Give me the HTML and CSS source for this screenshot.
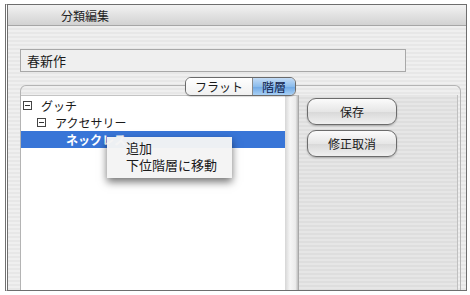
FILE: index.html
```html
<!DOCTYPE html>
<html lang="ja">
<head>
    <meta charset="UTF-8">
    <meta name="viewport" content="width=device-width, initial-scale=1.0">
    <title>分類編集</title>
    <link rel="stylesheet" href="styles.css">
</head>
<body>
    <div class="window">
        <div class="titlebar"><span class="title">分類編集</span></div>
        <div class="content">
            <div class="namefield">春新作</div>

            <div class="tabs">
                <div class="segmented">
                    <span class="seg seg-left">フラット</span>
                    <span class="seg seg-right active">階層</span>
                </div>
            </div>

            <div class="group">
                <div class="tree">
                    <div class="row level0"><span class="toggle"></span>グッチ</div>
                    <div class="row level1"><span class="toggle"></span>アクセサリー</div>
                    <div class="row level2 selected">ネックレス</div>

                    <!-- context menu over the selected row -->
                    <div class="menu">
                        <div class="menu-item">追加</div>
                        <div class="menu-item">下位階層に移動</div>
                    </div>
                </div>
                <div class="scrollbar"></div>
                <div class="actions">
                    <button type="button">保存</button>
                    <button type="button">修正取消</button>
                </div>
            </div>
        </div>
    </div>
</body>
</html>
```

FILE: styles.css
```css
body {
    margin: 0;
    padding: 4px 0 0 5px;
    font-family: "Noto Sans CJK JP", "Noto Sans", sans-serif;
    background: #ffffff;
    color: #1a1a1a;
}
.window {
    width: 458px;
    height: 285px;
    border: 1px solid #6e6e6e;
    border-left: 3px double #707070;
    display: flex;
    flex-direction: column;
    overflow: hidden;
}
.titlebar {
    height: 20px;
    border-bottom: 1px solid #a6a6a6;
    background: linear-gradient(#f2f2f2, #d2d2d2);
    display: flex;
    align-items: center;
    padding-left: 53px;
}
.title {
    font-size: 12px;
    color: #222;
}
.content {
    flex: 1;
    display: flex;
    flex-direction: column;
    padding: 23px 5px 0 12px;
    background: repeating-linear-gradient(#efefef 0, #efefef 2px, #e7e7e7 2px, #e7e7e7 4px);
    min-height: 0;
}
.namefield {
    width: 378px;
    height: 21px;
    border: 1px solid #a8a8a8;
    background: #efefef;
    font-size: 13px;
    line-height: 21px;
    padding-left: 6px;
}
.tabs {
    display: flex;
    justify-content: center;
    margin-top: 5px;
    position: relative;
    z-index: 1;
}
.segmented {
    display: flex;
    height: 17px;
    border: 1px solid #6a6a6a;
    border-radius: 6px;
    overflow: hidden;
    font-size: 12px;
    line-height: 17px;
    box-shadow: 0 1px 1px rgba(0, 0, 0, 0.15);
}
.seg {
    display: block;
    text-align: center;
}
.seg-left {
    width: 66px;
    background: linear-gradient(#ffffff, #f0f0f0);
    border-right: 1px solid #8a8a8a;
}
.seg-right {
    width: 42px;
}
.seg.active {
    background: linear-gradient(#c4dcf6, #8bbcec 50%, #6ea7e4 51%, #a8d0f5);
    color: #10204a;
}
.group {
    flex: 1;
    margin-top: -11px;
    border: 1px solid #b4b4b4;
    border-bottom: none;
    border-radius: 6px 6px 0 0;
    padding-top: 9px;
    display: flex;
    min-height: 0;
}
.tree {
    width: 264px;
    background: #ffffff;
    border-top: 1px solid #c4c4c4;
    padding-top: 1px;
    position: relative;
    font-size: 12px;
}
.row {
    height: 17px;
    line-height: 17px;
    display: flex;
    align-items: center;
    white-space: nowrap;
}
.level0 {
    padding-left: 2px;
}
.level1 {
    padding-left: 16px;
}
.level2 {
    padding-left: 45px;
}
.toggle {
    width: 7px;
    height: 7px;
    border: 1px solid #444;
    margin-right: 9px;
    position: relative;
    flex-shrink: 0;
}
.toggle::after {
    content: "";
    position: absolute;
    left: 1px;
    right: 1px;
    top: 3px;
    height: 1px;
    background: #333;
}
.selected {
    background: #3875d7;
    color: #ffffff;
    font-weight: bold;
}
.menu {
    position: absolute;
    left: 86px;
    top: 41px;
    width: 125px;
    height: 39px;
    padding-top: 2px;
    background: rgba(244, 244, 244, 0.97);
    box-shadow: 0 4px 8px rgba(0, 0, 0, 0.55);
    font-size: 13px;
}
.menu-item {
    height: 17px;
    line-height: 17px;
    padding-left: 19px;
}
.scrollbar {
    width: 13px;
    border-top: 1px solid #c4c4c4;
    background: linear-gradient(90deg, #d6d6d6, #f6f6f6 40%, #ececec 80%, #bdbdbd);
    border-right: 1px solid #a8a8a8;
}
.actions {
    flex: 1;
    display: flex;
    flex-direction: column;
    align-items: flex-start;
    gap: 5px;
    padding: 3px 0 0 8px;
    border-right: 1px solid #c0c0c0;
    margin-right: 2px;
    background: repeating-linear-gradient(#e6e6e6 0, #e6e6e6 2px, #dedede 2px, #dedede 4px);
}
.actions button {
    width: 90px;
    height: 27px;
    border: 1px solid #6c6c6c;
    border-radius: 9px;
    background: linear-gradient(#fbfbfb, #e6e6e6 50%, #d8d8d8 51%, #f0f0f0);
    font-family: "Noto Sans CJK JP", "Noto Sans", sans-serif;
    font-size: 12px;
    color: #1a1a1a;
    padding: 0;
    box-shadow: 0 1px 2px rgba(0, 0, 0, 0.25);
}
```
